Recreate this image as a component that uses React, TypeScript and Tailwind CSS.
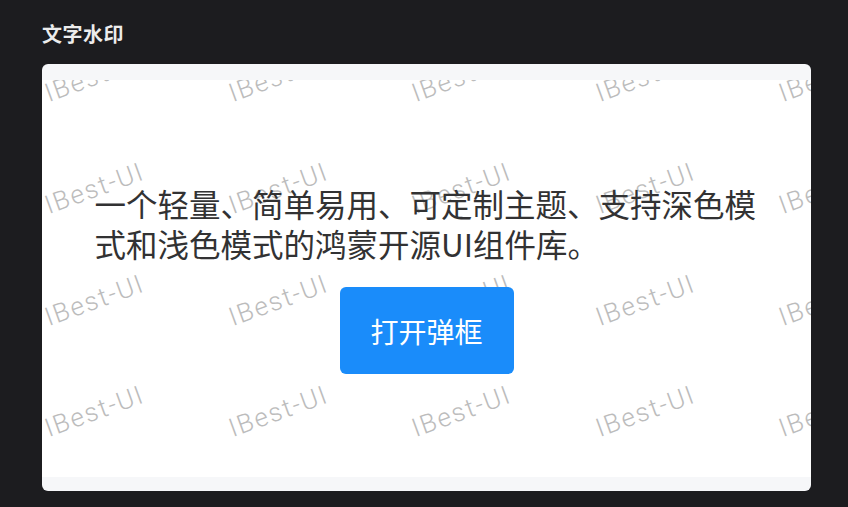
import React from "react";

const rows = [22, 134, 246, 357];
const cols = [8, 191.5, 375, 558.5, 742];

export default function App() {
  return (
    <div
      className="w-[848px] h-[507px] bg-[#1c1c1f] pt-[20px] pl-[42px]"
      style={{ fontFamily: '"Noto Sans CJK SC", "Noto Sans", sans-serif' }}
    >
      <h2 className="text-[20px] leading-[28px] font-bold text-[#ececec] mb-4 tracking-[0.5px]">
        文字水印
      </h2>
      <div className="w-[769px] rounded-[6px] overflow-hidden bg-[#f6f7f9] pt-4 pb-[14px]">
        <div className="relative bg-white h-[397px] overflow-hidden">
          <div className="absolute inset-0 pointer-events-none">
            {rows.map((r, ri) =>
              cols.map((c, ci) => (
                <span
                  key={`${ri}-${ci}`}
                  className="absolute font-['Roboto',sans-serif] font-light text-[26px] leading-none tracking-[1.8px] text-[#bcbcbc] whitespace-nowrap origin-bottom-left -rotate-[20deg]"
                  style={{ left: c, top: r - 22 }}
                >
                  IBest-UI
                </span>
              ))
            )}
          </div>
          <div className="relative h-full flex flex-col items-center justify-center">
            <p className="w-[664px] text-[31.5px] leading-[40px] text-[#323233] whitespace-nowrap [text-spacing-trim:space-all]">
              一个轻量、简单易用、可定制主题、支持深色模
              <br />
              式和浅色模式的鸿蒙开源UI组件库。
            </p>
            <button className="mt-6 w-[174px] h-[87px] rounded-[6px] bg-[#1a8cfa] text-white text-[28px] leading-none">
              打开弹框
            </button>
          </div>
        </div>
      </div>
    </div>
  );
}
